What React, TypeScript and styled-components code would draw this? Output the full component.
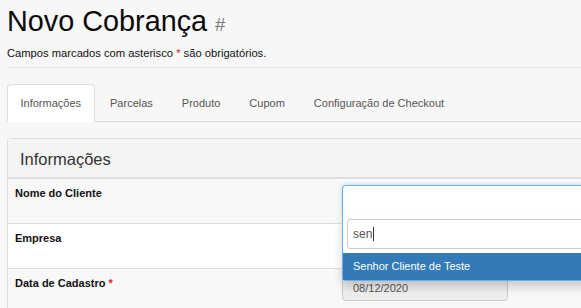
import styled, { createGlobalStyle } from "styled-components";

const GlobalStyle = createGlobalStyle`
  html, body {
    margin: 0;
    padding: 0;
    background: #f7f7f7;
    overflow: hidden;
  }
  body {
    font-family: "Liberation Sans", Arial, sans-serif;
    color: #111;
  }
`;

const Page = styled.div`
  width: 1000px;
  padding-left: 7px;
`;

const Title = styled.h1`
  margin: 5px 0 0;
  font-size: 28.8px;
  line-height: 32px;
  font-weight: normal;
  color: #0a0a0a;

  small {
    font-size: 18.5px;
    color: #777;
  }
`;

const Hint = styled.p`
  margin: 4px 0 0;
  font-size: 11.2px;
  line-height: 16px;
  color: #111;
`;

const Req = styled.span`
  color: #e02020;
`;

const Divider = styled.hr`
  margin: 6px 0 0;
  border: 0;
  border-top: 1px solid #e6e6e6;
`;

const Tabs = styled.ul`
  display: flex;
  list-style: none;
  margin: 16px 0 0;
  padding: 0;
  border-bottom: 1px solid #ddd;
`;

const Tab = styled.li<{ $active?: boolean }>`
  margin: 0 2px -1px 0;
  padding: 10px 12.5px;
  font-size: 11px;
  line-height: 16px;
  color: #555;
  border: 1px solid ${(p) => (p.$active ? "#ddd" : "transparent")};
  border-bottom-color: transparent;
  border-radius: 4px 4px 0 0;
  background: ${(p) => (p.$active ? "#fff" : "transparent")};
`;

const Panel = styled.section`
  margin-top: 16px;
  border: 1px solid #ddd;
  border-radius: 4px;
  background: #fff;
`;

const PanelHeader = styled.div`
  padding: 10px 12px 8px;
  background: #f4f4f4;
  border-bottom: 2px solid #ddd;
  font-size: 16.5px;
  line-height: 20px;
  color: #333;
`;

const Row = styled.div<{ $striped?: boolean }>`
  display: grid;
  grid-template-columns: 334px 1fr;
  height: 44px;
  background: ${(p) => (p.$striped ? "#f8f8f8" : "#fff")};
  & + & {
    border-top: 1px solid #ddd;
  }
`;

const Label = styled.div`
  padding: 6px 7px 0;
  font-size: 11px;
  line-height: 16px;
  font-weight: bold;
  color: #111;
`;

const Field = styled.div`
  position: relative;
  padding-top: 6px;
`;

const Selection = styled.div`
  height: 29px;
  width: 420px;
  background: #fff;
  border: 1px solid #66afe9;
  border-bottom: 0;
  border-radius: 4px 4px 0 0;
  box-shadow: 0 0 4px rgba(102, 175, 233, 0.5);
  position: relative;
  z-index: 3;
`;

const Dropdown = styled.div`
  position: absolute;
  top: 36px;
  left: 0;
  width: 420px;
  background: #fff;
  border: 1px solid #66afe9;
  border-top: 0;
  border-radius: 0 0 4px 4px;
  box-shadow: 0 6px 10px rgba(0, 0, 0, 0.18);
  padding-top: 4px;
  z-index: 4;
`;

const SearchBox = styled.div`
  margin: 0 4px 4px 4px;
  height: 28px;
  border: 1px solid #ccc;
  border-radius: 3px;
  padding: 0 5px;
  display: flex;
  align-items: center;
  font-size: 12px;
  color: #555;
`;

const Caret = styled.span`
  display: inline-block;
  width: 1px;
  height: 14px;
  background: #333;
  margin-left: 1px;
`;

const Option = styled.div`
  padding: 5px 10px 6px;
  line-height: 16px;
  font-size: 11px;
  color: #fff;
  background: #337ab7;
`;

const Input = styled.div<{ $disabled?: boolean }>`
  box-sizing: border-box;
  width: 166px;
  height: 26px;
  padding: 0 10px;
  border: 1px solid #ccc;
  border-radius: 4px;
  background: ${(p) => (p.$disabled ? "#eee" : "#fff")};
  font-size: 11px;
  line-height: 24px;
  color: #555;
`;

export default function App() {
  return (
    <>
      <GlobalStyle />
      <Page>
        <Title>
          Novo Cobrança <small>#</small>
        </Title>
        <Hint>
          Campos marcados com asterisco <Req>*</Req> são obrigatórios.
        </Hint>
        <Divider />
        <Tabs>
          <Tab $active>Informações</Tab>
          <Tab>Parcelas</Tab>
          <Tab>Produto</Tab>
          <Tab>Cupom</Tab>
          <Tab>Configuração de Checkout</Tab>
        </Tabs>
        <Panel>
          <PanelHeader>Informações</PanelHeader>
          <Row $striped>
            <Label>Nome do Cliente</Label>
            <Field>
              <Selection />
              <Dropdown>
                <SearchBox>
                  sen
                  <Caret />
                </SearchBox>
                <Option>Senhor Cliente de Teste</Option>
              </Dropdown>
            </Field>
          </Row>
          <Row>
            <Label>Empresa</Label>
            <Field>
              <Input />
            </Field>
          </Row>
          <Row $striped>
            <Label>
              Data de Cadastro <Req>*</Req>
            </Label>
            <Field>
              <Input $disabled>08/12/2020</Input>
            </Field>
          </Row>
        </Panel>
      </Page>
    </>
  );
}
